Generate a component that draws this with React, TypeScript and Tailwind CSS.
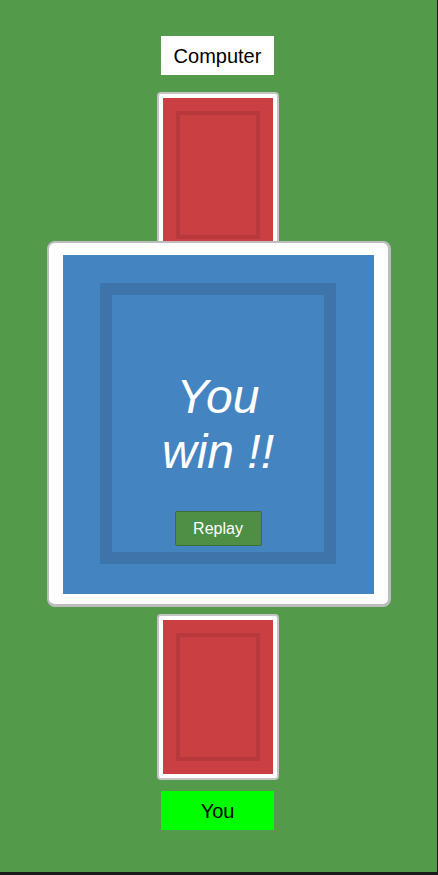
import React from "react";

function Card() {
  return (
    <div className="box-border w-[122px] h-[166px] rounded-[4px] border-2 border-[#c4c4c4] bg-white p-[4px]">
      <div className="w-full h-full bg-[#ca3f41] flex items-center justify-center">
        <div className="box-border w-[84px] h-[128px] border-[4px] border-[#b8393b]" />
      </div>
    </div>
  );
}

export default function App() {
  return (
    <div className="w-[438px] h-[875px] bg-[#1a1a1a] overflow-hidden" style={{ fontFamily: '"Liberation Sans", Arial, sans-serif' }}>
      <div className="relative w-[437px] h-[872px] bg-[#539a4a] flex flex-col items-center pt-[36px] pr-[2px]">
        <div className="w-[113px] h-[39px] bg-white flex items-center justify-center text-[20px] text-black">
          Computer
        </div>
        <div className="mt-[17px]">
          <Card />
        </div>
        <div className="h-[356px] shrink-0" />
        <Card />
        <div className="mt-[11px] w-[113px] h-[39px] bg-[#00ff00] flex items-center justify-center text-[20px] text-black">
          You
        </div>

        <div className="absolute left-[47px] top-[241px] box-border w-[344px] h-[366px] rounded-[8px] border-2 border-b-[3px] border-r-[3px] border-[#bdbdbd] bg-white pl-[14px] pt-[12px]">
          <div className="w-[311px] h-[339px] bg-[#4484c0] pl-[37px] pt-[28px]">
            <div className="box-border w-[236px] h-[281px] border-[12px] border-[#3d74a9] flex flex-col items-center pt-[74px]">
              <div className="text-white italic text-[48px] leading-[55px] text-center">
                You
                <br />
                win !!
              </div>
              <button className="mt-[32px] box-border w-[87px] h-[35px] bg-[#4e8f45] border border-[#3c6e36] rounded-[2px] text-white text-[16px] flex items-center justify-center">
                Replay
              </button>
            </div>
          </div>
        </div>
      </div>
    </div>
  );
}
